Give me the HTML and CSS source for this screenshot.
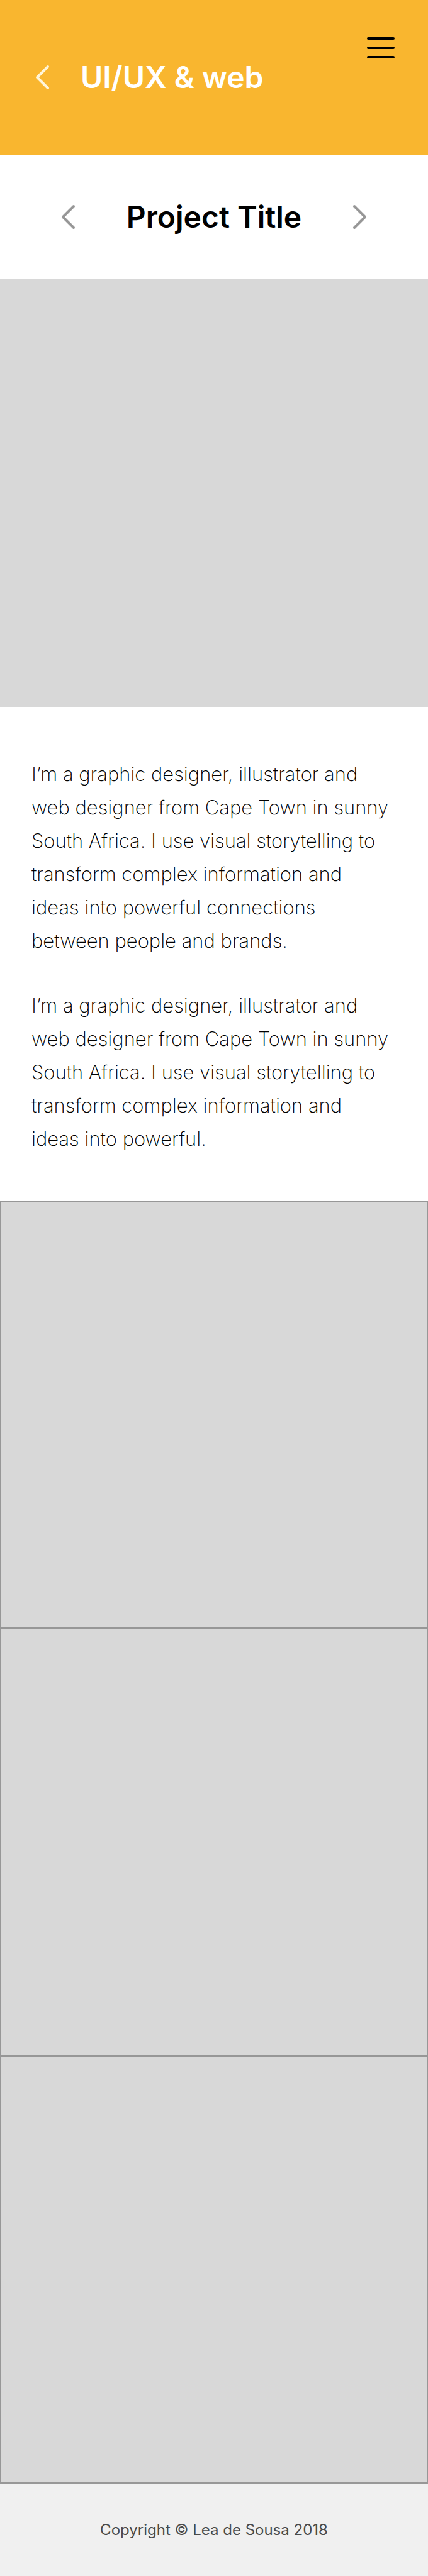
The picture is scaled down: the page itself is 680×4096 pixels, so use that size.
FILE: index.html
```html
<!DOCTYPE html>
<html lang="en">
<head>
<meta charset="utf-8">
<meta name="viewport" content="width=device-width, initial-scale=1">
<title>UI/UX &amp; web</title>
<link rel="stylesheet" href="styles.css">
</head>
<body>
<header class="header">
  <a class="icon-link" href="#" aria-label="Back">
    <svg class="chevron chevron-light" viewBox="0 0 24 40"><path d="M21 3 4 20l17 17"/></svg>
  </a>
  <h1 class="section-title">UI/UX &amp; web</h1>
  <button class="menu" type="button" aria-label="Menu">
    <svg class="menu-icon" viewBox="0 0 46 36"><path d="M3 3h40M3 18h40M3 33h40"/></svg>
  </button>
</header>
<main>
  <nav class="project-nav" aria-label="Projects">
    <a class="icon-link" href="#" aria-label="Previous project">
      <svg class="chevron" viewBox="0 0 24 40"><path d="M21 3 4 20l17 17"/></svg>
    </a>
    <h2 class="project-title">Project Title</h2>
    <a class="icon-link" href="#" aria-label="Next project">
      <svg class="chevron" viewBox="0 0 24 40"><path d="m3 3 17 17L3 37"/></svg>
    </a>
  </nav>
  <div class="tile"></div>
  <div class="copy">
    <p>I’m a graphic designer, illustrator and<br>web designer from Cape Town in sunny<br>South Africa. I use visual storytelling to<br>transform complex information and<br>ideas into powerful connections<br>between people and brands.</p>
    <p>I’m a graphic designer, illustrator and<br>web designer from Cape Town in sunny<br>South Africa. I use visual storytelling to<br>transform complex information and<br>ideas into powerful.</p>
  </div>
  <div class="tile tile-framed"></div>
  <div class="tile tile-framed"></div>
  <div class="tile tile-framed"></div>
</main>
<footer class="footer">Copyright © Lea de Sousa 2018</footer>
</body>
</html>
```
FILE: styles.css
```css
* {
  box-sizing: border-box;
}

body {
  margin: 0;
  background: #fff;
  color: #000;
  font-family: Inter, "Open Sans", sans-serif;
}

h1,
h2,
p {
  margin: 0;
}

.header {
  display: flex;
  align-items: flex-start;
  padding: 56px 52px 92px 55px;
  background: #f9b62f;
}

.icon-link {
  display: flex;
}

.header .icon-link {
  margin-top: 47px;
}

.chevron {
  width: 24px;
  height: 40px;
  fill: none;
  stroke: #979797;
  stroke-width: 4;
  stroke-linecap: round;
  stroke-linejoin: round;
}

.chevron-light {
  stroke: #fff5d9;
}

.section-title,
.project-title {
  font-size: 48px;
  font-weight: 600;
  line-height: 64px;
}

.section-title {
  flex: 1;
  margin: 35px 0 0 49px;
  color: #fff;
}

.menu {
  display: flex;
  padding: 2px 0 0;
  border: 0;
  background: none;
  cursor: pointer;
}

.menu-icon {
  width: 46px;
  height: 36px;
  fill: none;
  stroke: #000;
  stroke-width: 4;
  stroke-linecap: round;
}

.project-nav {
  display: flex;
  align-items: center;
  justify-content: space-between;
  padding: 66px 96px 67px;
}

.tile {
  aspect-ratio: 1;
  background: #d8d8d8;
}

.tile-framed {
  border: 2px solid #979797;
}

.copy {
  display: grid;
  gap: 50px;
  padding: 80px 50px 72px;
  font-size: 31px;
  font-weight: 200;
  line-height: 53px;
}

.footer {
  padding: 54px 20px;
  background: #f0f0f0;
  color: #4a4a4a;
  font-size: 24px;
  font-weight: 400;
  line-height: 39px;
  text-align: center;
}
```
